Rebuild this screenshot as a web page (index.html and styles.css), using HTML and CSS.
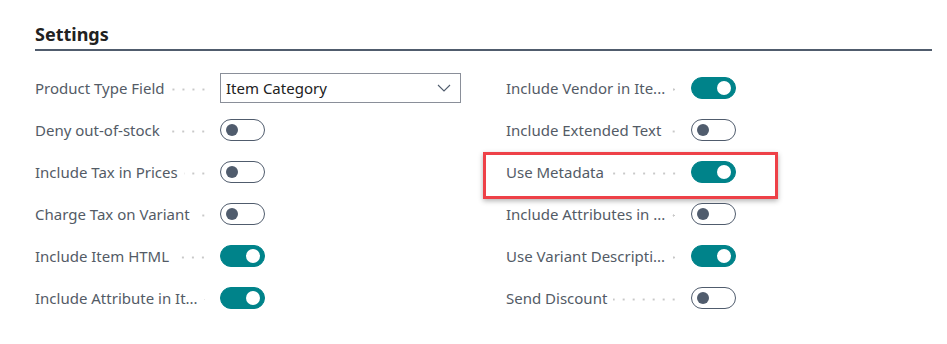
FILE: index.html
```html
<!DOCTYPE html>
<html lang="en">
<head>
  <meta charset="UTF-8">
  <title>Settings</title>
  <link rel="stylesheet" href="styles.css">
</head>
<body>
  <div class="section">
    <h2 class="section-title">Settings</h2>
    <div class="fields">
      <!-- left column -->
      <div class="col">
        <div class="field">
          <div class="caption"><span class="label">Product Type Field</span><span class="leader"></span></div>
          <div class="select">Item Category
            <svg class="chevron" width="14" height="8" viewBox="0 0 14 8"><path d="M1 1l6 6 6-6" fill="none" stroke="#505c6d" stroke-width="1.1"/></svg>
          </div>
        </div>
        <div class="field">
          <div class="caption"><span class="label">Deny out-of-stock</span><span class="leader"></span></div>
          <span class="toggle"></span>
        </div>
        <div class="field">
          <div class="caption"><span class="label">Include Tax in Prices</span><span class="leader"></span></div>
          <span class="toggle"></span>
        </div>
        <div class="field">
          <div class="caption"><span class="label">Charge Tax on Variant</span><span class="leader"></span></div>
          <span class="toggle"></span>
        </div>
        <div class="field">
          <div class="caption"><span class="label">Include Item HTML</span><span class="leader"></span></div>
          <span class="toggle on"></span>
        </div>
        <div class="field">
          <div class="caption"><span class="label">Include Attribute in It...</span><span class="leader"></span></div>
          <span class="toggle on"></span>
        </div>
      </div>
      <!-- right column -->
      <div class="col">
        <div class="field">
          <div class="caption"><span class="label">Include Vendor in Ite...</span><span class="leader"></span></div>
          <span class="toggle on"></span>
        </div>
        <div class="field">
          <div class="caption"><span class="label">Include Extended Text</span><span class="leader"></span></div>
          <span class="toggle"></span>
        </div>
        <div class="field marked">
          <div class="caption"><span class="label">Use Metadata</span><span class="leader"></span></div>
          <span class="toggle on"></span>
        </div>
        <div class="field">
          <div class="caption"><span class="label">Include Attributes in ...</span><span class="leader"></span></div>
          <span class="toggle"></span>
        </div>
        <div class="field">
          <div class="caption"><span class="label">Use Variant Descripti...</span><span class="leader"></span></div>
          <span class="toggle on"></span>
        </div>
        <div class="field">
          <div class="caption"><span class="label">Send Discount</span><span class="leader"></span></div>
          <span class="toggle"></span>
        </div>
      </div>
    </div>
  </div>
</body>
</html>
```

FILE: styles.css
```css
/* Base */
* {
  margin: 0;
  padding: 0;
  box-sizing: border-box;
  font-family: 'Noto Sans', 'Open Sans', sans-serif;
}
body {
  background: #fff;
  color: #212121;
  width: 947px;
  height: 344px;
  overflow: hidden;
}
.section {
  padding: 22px 15px 0 35px;
}
.section-title {
  font-size: 18px;
  font-weight: 700;
  line-height: 24px;
  color: #212121;
  padding-bottom: 3px;
  border-bottom: 2px solid #505c6d;
}
.fields {
  display: grid;
  grid-template-columns: 426px 426px;
  column-gap: 45px;
  padding-top: 16px;
}
.field {
  display: flex;
  align-items: center;
  height: 42px;
  position: relative;
}
/* caption + dotted leader take a fixed 185px */
.caption {
  display: flex;
  align-items: center;
  width: 185px;
  flex: none;
  padding-right: 12px;
}
.label {
  flex: none;
  font-size: 15px;
  color: #535b66;
  white-space: nowrap;
}
.leader {
  flex: 1;
  min-width: 0;
  height: 3px;
  margin: 2px 0 0 6px;
  background: radial-gradient(circle, #c8c8c8 0.9px, transparent 1.3px) right center / 10px 3px repeat-x;
}
.select {
  width: 241px;
  height: 30px;
  border: 1px solid #8a8f99;
  padding: 0 9px 0 5px;
  font-size: 15px;
  color: #212121;
  display: flex;
  justify-content: space-between;
  align-items: center;
}
.toggle {
  display: block;
  flex: none;
  width: 45px;
  height: 22px;
  border: 1px solid #505c6d;
  border-radius: 11px;
  background: #fff;
  position: relative;
}
.toggle::after {
  content: "";
  position: absolute;
  top: 4px;
  left: 5px;
  width: 12px;
  height: 12px;
  border-radius: 50%;
  background: #505c6d;
}
.toggle.on {
  background: #00838a;
  border-color: #00838a;
}
.toggle.on::after {
  left: auto;
  right: 4px;
  top: 3px;
  width: 14px;
  height: 14px;
  background: #fff;
}
/* highlight box on the field */
.marked::before {
  content: "";
  position: absolute;
  left: -23px;
  top: 1px;
  width: 289px;
  height: 41px;
  border: 3px solid #ee4148;
  box-shadow: 0 2px 5px rgba(0, 0, 0, 0.3);
}
```
